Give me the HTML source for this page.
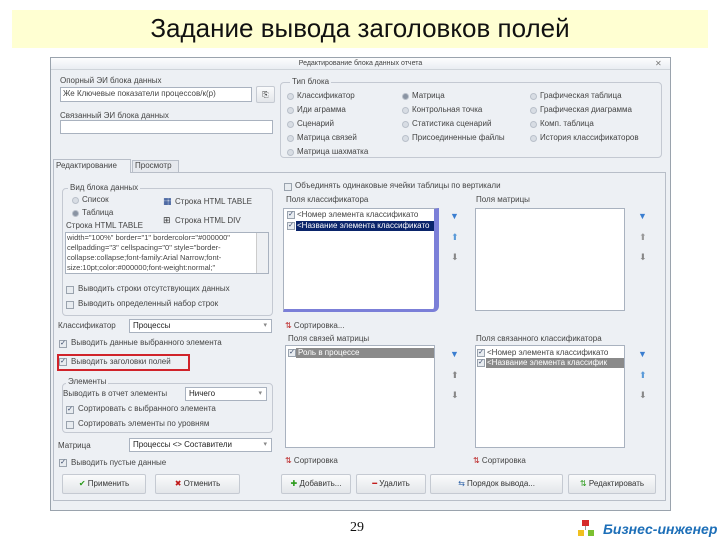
<!DOCTYPE html>
<html><head><meta charset="utf-8"><style>
*{box-sizing:border-box;margin:0;padding:0}
body{width:720px;height:540px;background:#fff;position:relative;overflow:hidden;font-family:"Liberation Sans","DejaVu Sans",sans-serif;font-size:8px;color:#222}
.a{position:absolute;white-space:nowrap}
.t{position:absolute;white-space:nowrap;font-size:8px;line-height:10px;color:#444}
.box{position:absolute;background:#fff;border:1px solid #a9b2bf}
.grp{position:absolute;border:1px solid #c4c9d2;border-radius:4px}
.rb{position:absolute;width:7px;height:7px;border-radius:50%;background:#d8dde4;border:1px solid #b9c0ca}
.cb{position:absolute;width:8px;height:8px;background:#e8ecf0;border:1px solid #9aa3ae;font-size:7px;line-height:6px;color:#346;text-align:center}
.btn{position:absolute;height:20px;background:linear-gradient(#fafbfc,#e3e6ea);border:1px solid #c5cad2;border-radius:2px;font-size:8px;line-height:18px;text-align:center;color:#333}
.combo{position:absolute;background:#fff;border:1px solid #a9b2bf;height:14px;font-size:8px;line-height:12px;padding-left:3px}
.combo:after{content:"▾";position:absolute;right:4px;top:0;color:#888;font-size:7px}
.ic{position:absolute;font-size:9px;line-height:9px}
</style></head><body>
<div class="a" style="left:12px;top:10px;width:696px;height:38px;background:#ffffd2"></div>
<div class="a" style="left:0;top:12px;width:720px;text-align:center;font-size:26px;line-height:32px;color:#111">Задание вывода заголовков полей</div>

<div class="a" style="left:50px;top:57px;width:621px;height:454px;background:#edf0f4;border:1px solid #9aa3ad"></div>
<div class="a" style="left:51px;top:58px;width:619px;height:12px;background:linear-gradient(#fdfdfe,#e9edf2);border-bottom:1px solid #cfd4da"></div>
<div class="t" style="left:51px;top:59px;width:619px;text-align:center;font-size:7px">Редактирование блока данных отчета</div>
<div class="t" style="left:655px;top:59px;color:#777">✕</div>

<div class="t" style="left:60px;top:76px">Опорный ЭИ блока данных</div>
<div class="box" style="left:60px;top:87px;width:192px;height:15px"></div>
<div class="t" style="left:63px;top:89px">Же Ключевые показатели процессов/к(р)</div>
<div class="btn" style="left:256px;top:86px;width:19px;height:17px;line-height:15px">⎘</div>
<div class="t" style="left:60px;top:111px">Связанный ЭИ блока данных</div>
<div class="box" style="left:60px;top:120px;width:213px;height:14px"></div>

<div class="grp" style="left:280px;top:82px;width:382px;height:76px"></div>
<div class="t" style="left:290px;top:77px;background:#edf0f4;padding:0 2px">Тип блока</div>
<div class="rb" style="left:287px;top:93px"></div><div class="t" style="left:297px;top:91px">Классификатор</div>
<div class="rb" style="left:287px;top:107px"></div><div class="t" style="left:297px;top:105px">Иди аграмма</div>
<div class="rb" style="left:287px;top:121px"></div><div class="t" style="left:297px;top:119px">Сценарий</div>
<div class="rb" style="left:287px;top:135px"></div><div class="t" style="left:297px;top:133px">Матрица связей</div>
<div class="rb" style="left:287px;top:149px"></div><div class="t" style="left:297px;top:147px">Матрица шахматка</div>
<div class="rb" style="left:402px;top:93px;background:#8a94a3"></div><div class="t" style="left:412px;top:91px">Матрица</div>
<div class="rb" style="left:402px;top:107px"></div><div class="t" style="left:412px;top:105px">Контрольная точка</div>
<div class="rb" style="left:402px;top:121px"></div><div class="t" style="left:412px;top:119px">Статистика сценарий</div>
<div class="rb" style="left:402px;top:135px"></div><div class="t" style="left:412px;top:133px">Присоединенные файлы</div>
<div class="rb" style="left:530px;top:93px"></div><div class="t" style="left:540px;top:91px">Графическая таблица</div>
<div class="rb" style="left:530px;top:107px"></div><div class="t" style="left:540px;top:105px">Графическая диаграмма</div>
<div class="rb" style="left:530px;top:121px"></div><div class="t" style="left:540px;top:119px">Комп. таблица</div>
<div class="rb" style="left:530px;top:135px"></div><div class="t" style="left:540px;top:133px">История классификаторов</div>

<div class="a" style="left:53px;top:172px;width:613px;height:329px;border:1px solid #b8bec8;background:#edf0f4"></div>
<div class="a" style="left:53px;top:159px;width:78px;height:14px;background:#edf0f4;border:1px solid #b8bec8;border-bottom:none"></div>
<div class="t" style="left:56px;top:161px">Редактирование</div>
<div class="a" style="left:132px;top:160px;width:47px;height:12px;background:#e6e9ee;border:1px solid #b8bec8;border-bottom:none"></div>
<div class="t" style="left:135px;top:161px">Просмотр</div>

<div class="grp" style="left:62px;top:188px;width:211px;height:128px"></div>
<div class="t" style="left:68px;top:183px;background:#edf0f4;padding:0 2px">Вид блока данных</div>
<div class="rb" style="left:72px;top:197px"></div><div class="t" style="left:82px;top:195px">Список</div>
<div class="rb" style="left:72px;top:210px;background:#8a94a3"></div><div class="t" style="left:82px;top:208px">Таблица</div>
<div class="t" style="left:66px;top:221px">Строка HTML TABLE</div>
<div class="ic" style="left:163px;top:197px;color:#1b3f8a">▦</div><div class="t" style="left:175px;top:197px">Строка HTML TABLE</div>
<div class="ic" style="left:163px;top:216px;color:#333">⊞</div><div class="t" style="left:175px;top:216px">Строка HTML DIV</div>
<div class="box" style="left:65px;top:232px;width:204px;height:42px"></div>
<div class="a" style="left:256px;top:233px;width:12px;height:40px;background:#eef0f3;border-left:1px solid #ccc"></div>
<div class="t" style="left:67px;top:233px;font-size:7.5px;line-height:10px">width="100%" border="1" bordercolor="#000000"<br>cellpadding="3" cellspacing="0" style="border-<br>collapse:collapse;font-family:Arial Narrow;font-<br>size:10pt;color:#000000;font-weight:normal;"</div>
<div class="cb" style="left:66px;top:286px"></div><div class="t" style="left:78px;top:284px">Выводить строки отсутствующих данных</div>
<div class="cb" style="left:66px;top:301px"></div><div class="t" style="left:78px;top:299px">Выводить определенный набор строк</div>

<div class="t" style="left:58px;top:321px">Классификатор</div>
<div class="combo" style="left:129px;top:319px;width:143px">Процессы</div>
<div class="cb" style="left:59px;top:340px">✓</div><div class="t" style="left:71px;top:338px">Выводить данные выбранного элемента</div>
<div class="a" style="left:57px;top:354px;width:133px;height:17px;border:2px solid #d0232a"></div>
<div class="cb" style="left:59px;top:358px">✓</div><div class="t" style="left:71px;top:357px">Выводить заголовки полей</div>

<div class="grp" style="left:62px;top:383px;width:211px;height:50px"></div>
<div class="t" style="left:66px;top:377px;background:#edf0f4;padding:0 2px">Элементы</div>
<div class="t" style="left:63px;top:389px">Выводить в отчет элементы</div>
<div class="combo" style="left:185px;top:387px;width:82px">Ничего</div>
<div class="cb" style="left:66px;top:406px">✓</div><div class="t" style="left:78px;top:404px">Сортировать с выбранного элемента</div>
<div class="cb" style="left:66px;top:421px"></div><div class="t" style="left:78px;top:419px">Сортировать элементы по уровням</div>

<div class="t" style="left:58px;top:441px">Матрица</div>
<div class="combo" style="left:129px;top:438px;width:143px">Процессы &lt;&gt; Составители</div>
<div class="cb" style="left:59px;top:459px">✓</div><div class="t" style="left:71px;top:458px">Выводить пустые данные</div>
<div class="btn" style="left:62px;top:474px;width:84px"><span style="color:#2a9a1a;font-weight:bold">✔</span> Применить</div>
<div class="btn" style="left:155px;top:474px;width:85px"><span style="color:#c01818;font-weight:bold">✖</span> Отменить</div>

<div class="cb" style="left:284px;top:183px"></div><div class="t" style="left:295px;top:181px">Объединять одинаковые ячейки таблицы по вертикали</div>
<div class="t" style="left:286px;top:195px">Поля классификатора</div>
<div class="a" style="left:283px;top:208px;width:156px;height:104px;background:#fff;border:1px solid #a9b2bf;border-right:5px solid #7b7fd8;border-bottom:3px solid #7b7fd8;border-radius:0 0 6px 0"></div>
<div class="cb" style="left:287px;top:211px">✓</div><div class="t" style="left:297px;top:210px">&lt;Номер элемента классификато</div>
<div class="a" style="left:296px;top:221px;width:138px;height:10px;background:#0a246a"></div>
<div class="cb" style="left:287px;top:222px">✓</div><div class="t" style="left:297px;top:221px;color:#fff">&lt;Название элемента классификато</div>
<div class="ic" style="left:450px;top:212px;color:#3a7ed0">▼</div>
<div class="ic" style="left:451px;top:233px;color:#5a9ad8">⬆</div>
<div class="ic" style="left:451px;top:253px;color:#888">⬇</div>

<div class="t" style="left:476px;top:195px">Поля матрицы</div>
<div class="box" style="left:475px;top:208px;width:150px;height:103px"></div>
<div class="ic" style="left:638px;top:212px;color:#3a7ed0">▼</div>
<div class="ic" style="left:639px;top:233px;color:#999">⬆</div>
<div class="ic" style="left:639px;top:253px;color:#888">⬇</div>

<div class="t" style="left:285px;top:321px"><span style="color:#b22">⇅</span> Сортировка...</div>
<div class="t" style="left:288px;top:334px">Поля связей матрицы</div>
<div class="box" style="left:285px;top:345px;width:150px;height:103px"></div>
<div class="a" style="left:296px;top:348px;width:138px;height:10px;background:#8a8a8a"></div>
<div class="cb" style="left:288px;top:349px">✓</div><div class="t" style="left:298px;top:348px;color:#fff">Роль в процессе</div>
<div class="ic" style="left:450px;top:350px;color:#3a7ed0">▼</div>
<div class="ic" style="left:451px;top:371px;color:#888">⬆</div>
<div class="ic" style="left:451px;top:391px;color:#888">⬇</div>

<div class="t" style="left:476px;top:334px">Поля связанного классификатора</div>
<div class="box" style="left:475px;top:345px;width:150px;height:103px"></div>
<div class="cb" style="left:477px;top:349px">✓</div><div class="t" style="left:487px;top:348px">&lt;Номер элемента классификато</div>
<div class="a" style="left:486px;top:358px;width:138px;height:10px;background:#8a8a8a"></div>
<div class="cb" style="left:477px;top:359px">✓</div><div class="t" style="left:487px;top:358px;color:#fff">&lt;Название элемента классифик</div>
<div class="ic" style="left:638px;top:350px;color:#3a7ed0">▼</div>
<div class="ic" style="left:639px;top:371px;color:#5a9ad8">⬆</div>
<div class="ic" style="left:639px;top:391px;color:#888">⬇</div>

<div class="t" style="left:285px;top:456px"><span style="color:#b22">⇅</span> Сортировка</div>
<div class="t" style="left:473px;top:456px"><span style="color:#b22">⇅</span> Сортировка</div>

<div class="btn" style="left:281px;top:474px;width:70px"><span style="color:#2a9a1a;font-weight:bold">✚</span> Добавить...</div>
<div class="btn" style="left:356px;top:474px;width:70px"><span style="color:#c01818;font-weight:bold">━</span> Удалить</div>
<div class="btn" style="left:430px;top:474px;width:133px"><span style="color:#36a">⇆</span> Порядок вывода...</div>
<div class="btn" style="left:568px;top:474px;width:88px"><span style="color:#2a9a1a">⇅</span> Редактировать</div>

<div class="a" style="left:350px;top:520px;font-family:'Liberation Serif',serif;font-size:14px;color:#111">29</div>
<div class="a" style="left:582px;top:520px;width:7px;height:6px;background:#d62a2a"></div>
<div class="a" style="left:578px;top:530px;width:6px;height:6px;background:#f0c020"></div>
<div class="a" style="left:588px;top:530px;width:6px;height:6px;background:#7cc030"></div>
<div class="a" style="left:585px;top:526px;width:1px;height:4px;background:#999"></div>
<div class="a" style="left:603px;top:521px;font-size:14px;font-weight:bold;font-style:italic;color:#1d6fb8">Бизнес-инженер</div>
</body></html>
